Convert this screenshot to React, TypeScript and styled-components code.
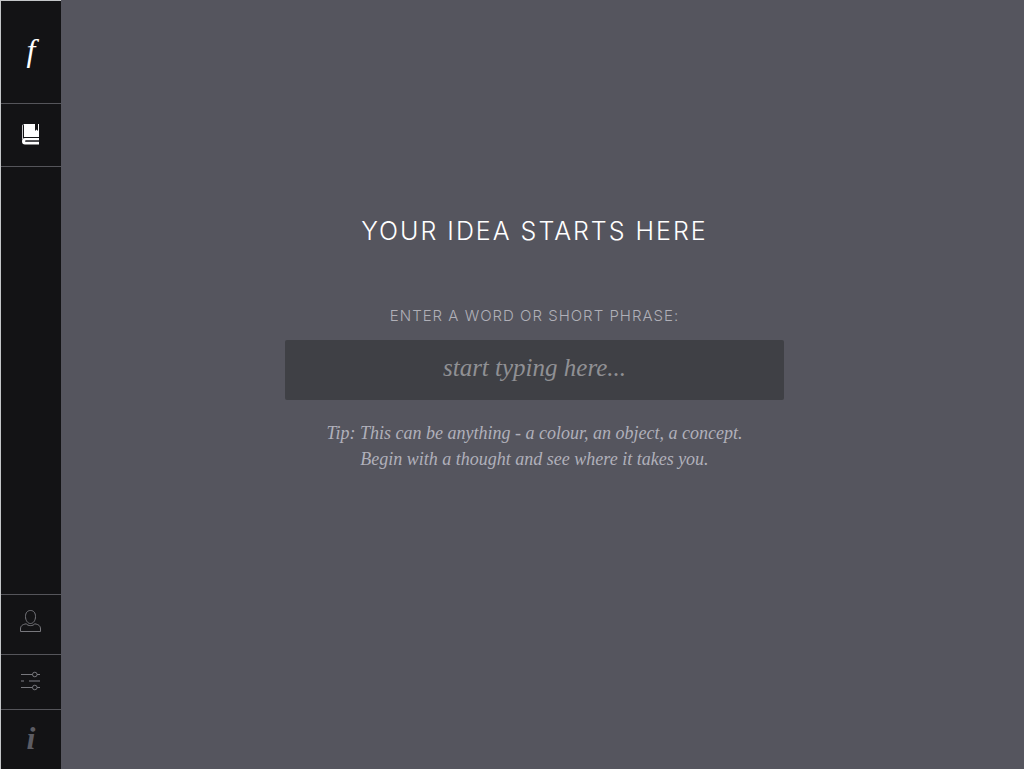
import React from 'react';
import styled, { createGlobalStyle } from 'styled-components';

const GlobalStyle = createGlobalStyle`
  * { box-sizing: border-box; }
  body {
    margin: 0;
    background: #55555e;
    color: #fff;
    font-family: Inter, 'Liberation Sans', sans-serif;
  }
`;

const serif = `'Liberation Serif', 'Times New Roman', serif`;

const Page = styled.div`
  display: flex;
  min-height: 100vh;
`;

const Sidebar = styled.nav`
  display: flex;
  flex-direction: column;
  flex: none;
  width: 61px;
  background: #131315;
  border-left: 1px solid #c4c6c8;
  border-top: 1px solid #c4c6c8;
`;

const NavButton = styled.button<{ $height: number; $line?: 'top' | 'bottom'; $lift?: number }>`
  display: flex;
  align-items: center;
  justify-content: center;
  height: ${(p) => p.$height}px;
  padding: 0 0 ${(p) => p.$lift ?? 0}px;
  border: 0 solid #55555a;
  border-top-width: ${(p) => (p.$line === 'top' ? 1 : 0)}px;
  border-bottom-width: ${(p) => (p.$line === 'bottom' ? 1 : 0)}px;
  background: none;
  color: #77777c;
  cursor: pointer;
`;

const Spacer = styled.div`
  flex: 1;
`;

const Glyph = styled.span<{ $color: string; $bold?: boolean }>`
  font: italic ${(p) => (p.$bold ? 700 : 400)} 32px/32px ${serif};
  color: ${(p) => p.$color};
`;

const Main = styled.main`
  display: flex;
  flex: 1;
  justify-content: center;
  padding: 212px 16px 32px 0;
`;

const Form = styled.form`
  display: flex;
  flex-direction: column;
  align-items: center;
  width: 100%;
  max-width: 499px;
  text-align: center;
`;

const Title = styled.h1`
  margin: 0 0 58px;
  font-size: 25px;
  line-height: 38px;
  font-weight: 300;
  letter-spacing: 2px;
`;

const Label = styled.label`
  margin-bottom: 16px;
  font-size: 15px;
  line-height: 16px;
  letter-spacing: 1px;
  font-weight: 300;
  color: #b0b0b8;
`;

const IdeaInput = styled.input`
  width: 100%;
  height: 60px;
  padding: 0 16px 4px;
  border: 0;
  border-radius: 2px;
  outline: 0;
  background: #3f4045;
  color: #fff;
  text-align: center;
  font: italic 25px/32px ${serif};
  &::placeholder {
    color: #909094;
    opacity: 1;
  }
`;

const Tip = styled.p`
  margin: 20px 0 0;
  font: italic 18px/26px ${serif};
  color: #b0b0ba;
`;

const BookIcon = () => (
  <svg width="20" height="22" viewBox="0 0 20 22" fill="#fff" aria-hidden="true">
    <path d="M3 0H14V7L15.500 5.500L17 7V0H18V13H3Z" />
    <path d="M1.500 15V2Q1.500 .500 2.500 .500" fill="none" stroke="#c8c8ca" />
    <path d="M18 14H4Q1 14 1 17.200T4 20.400H18V18H4.500V16.300H18Z" />
    <path d="M4 17.200H18" fill="none" stroke="#66666a" />
  </svg>
);

const UserIcon = () => (
  <svg width="22" height="24" viewBox="0 0 22 24" fill="none" stroke="currentColor" aria-hidden="true">
    <path d="M10.500 1.500C7.200 1.500 5.500 4 5.500 7.500C5.500 11.500 7.700 14.500 10.500 14.500S15.500 11.500 15.500 7.500C15.500 4 13.800 1.500 10.500 1.500Z" />
    <path d="M6.200 14.800C2.200 15.500 .500 17 .500 20V22.500H20.500V20C20.500 17 18.800 15.500 14.800 14.800C13 17.200 8 17.200 6.200 14.800Z" />
  </svg>
);

const SlidersIcon = () => (
  <svg width="20" height="20" viewBox="0 0 20 20" fill="none" stroke="currentColor" aria-hidden="true">
    <path d="M0 3.500H11.500M16 3.500H19M0 16.500H11.500M16 16.500H19" />
    <path d="M0 10H3M8 10H19" stroke="#48484d" strokeWidth="2" />
    <circle cx="13.800" cy="3.500" r="2.300" />
    <circle cx="13.800" cy="16.500" r="2.300" />
  </svg>
);

export default function App() {
  return (
    <>
      <GlobalStyle />
      <Page>
        <Sidebar>
          <NavButton type="button" aria-label="Home" $height={103} $line="bottom" $lift={4}>
            <Glyph $color="#fff">f</Glyph>
          </NavButton>
          <NavButton type="button" aria-label="Library" $height={63} $line="bottom">
            <BookIcon />
          </NavButton>
          <Spacer />
          <NavButton type="button" aria-label="Account" $height={60} $line="top" $lift={8}>
            <UserIcon />
          </NavButton>
          <NavButton type="button" aria-label="Settings" $height={55} $line="top" $lift={2}>
            <SlidersIcon />
          </NavButton>
          <NavButton type="button" aria-label="Information" $height={60} $line="top" $lift={4}>
            <Glyph $color="#5c5c63" $bold>i</Glyph>
          </NavButton>
        </Sidebar>
        <Main>
          <Form onSubmit={(e) => e.preventDefault()}>
            <Title>YOUR IDEA STARTS HERE</Title>
            <Label htmlFor="idea">ENTER A WORD OR SHORT PHRASE:</Label>
            <IdeaInput id="idea" type="text" autoComplete="off" placeholder="start typing here..." />
            <Tip>
              Tip: This can be anything - a colour, an object, a concept.
              <br />
              Begin with a thought and see where it takes you.
            </Tip>
          </Form>
        </Main>
      </Page>
    </>
  );
}
